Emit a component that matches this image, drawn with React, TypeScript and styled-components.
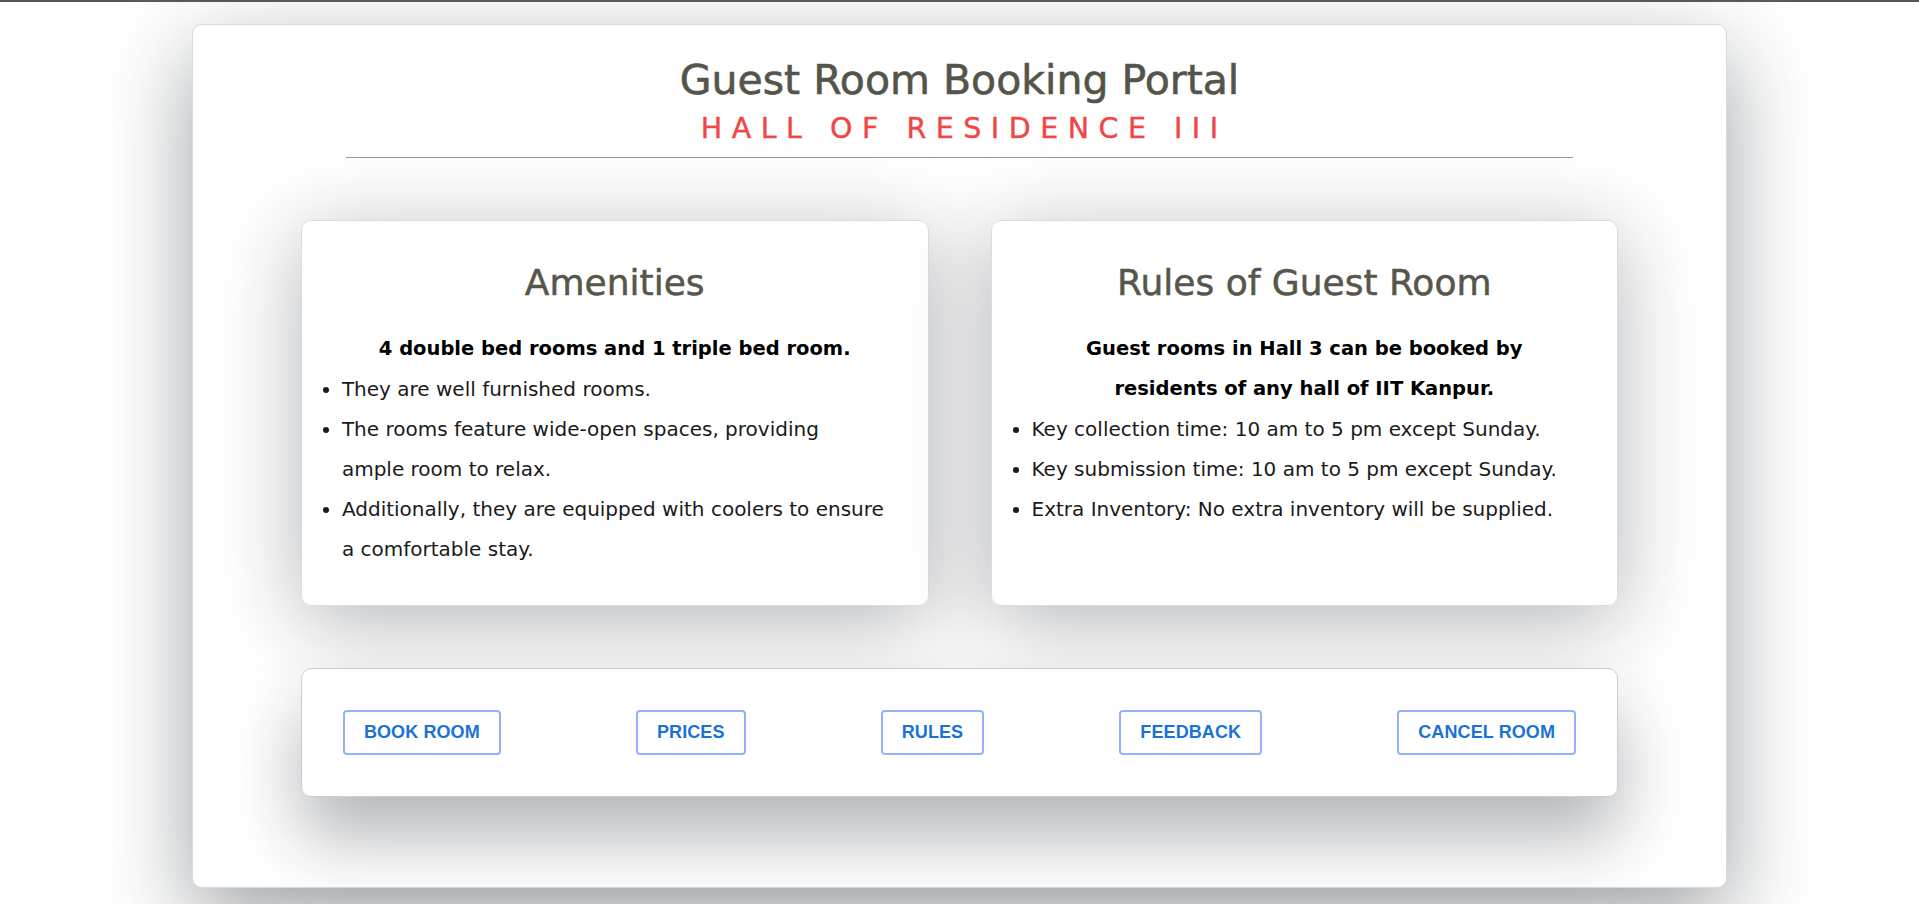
import React from "react";
import styled, { createGlobalStyle } from "styled-components";

const GlobalStyle = createGlobalStyle`
  html, body {
    margin: 0;
    padding: 0;
    background: #ffffff;
  }
  body {
    border-top: 2px solid #585858;
    font-family: "DejaVu Sans", "Open Sans", sans-serif;
  }
  * { box-sizing: border-box; }
`;

const Page = styled.div`
  padding: 22px 0 16px;
`;

const Portal = styled.main`
  width: 80%;
  margin: 0 auto;
  background: #ffffff;
  border: 1px solid #d6dbe2;
  border-radius: 10px;
  box-shadow: 0 30px 90px rgba(20, 30, 40, 0.42);
  padding: 31px 0 90px;
`;

const Header = styled.header`
  display: flex;
  flex-direction: column;
  align-items: center;
`;

const Title = styled.h1`
  margin: 0;
  font-family: "DejaVu Sans", sans-serif;
  font-weight: 400;
  font-size: 41px;
  line-height: 49px;
  color: #55544a;
  -webkit-text-stroke: 0.6px #55544a;
`;

const Subtitle = styled.h2`
  margin: 7px 0 0;
  font-family: "DejaVu Sans", sans-serif;
  font-weight: 400;
  font-size: 28.5px;
  line-height: 33.6px;
  letter-spacing: 9.5px;
  margin-right: -9.5px;
  color: #f24545;
  -webkit-text-stroke: 0.4px #f24545;
`;

const Divider = styled.hr`
  width: 80%;
  margin: 11px auto 0;
  border: none;
  border-top: 1px solid #9a9a9a;
  height: 0;
`;

const Body = styled.section`
  padding: 62px 108px 0;
  display: flex;
  flex-direction: column;
  gap: 62px;
`;

const CardRow = styled.div`
  display: grid;
  grid-template-columns: 1fr 1fr;
  gap: 62px;
`;

const Card = styled.article`
  background: rgba(255, 255, 255, 0.84);
  border: 1px solid #d9dde3;
  border-radius: 10px;
  box-shadow: 0 16px 85px rgba(20, 25, 35, 0.32);
  padding: 40px 20px 36px;
`;

const CardTitle = styled.h3`
  margin: 0 0 25px;
  text-align: center;
  font-family: "DejaVu Sans", sans-serif;
  font-weight: 400;
  font-size: 36px;
  line-height: 43.2px;
  color: #57564a;
  -webkit-text-stroke: 0.5px #57564a;
`;

const Lead = styled.p`
  margin: 0;
  padding: 0 40px;
  text-align: center;
  font-family: "DejaVu Sans", sans-serif;
  font-weight: 700;
  font-size: 19.5px;
  line-height: 40px;
  color: #000000;
`;

const List = styled.ul`
  margin: 0;
  padding: 0 20px 0 20px;
  list-style: disc;
`;

const Item = styled.li`
  font-family: "DejaVu Sans", sans-serif;
  font-size: 20px;
  line-height: 40px;
  color: #1a1a1a;
`;

const ActionBar = styled.nav`
  display: flex;
  justify-content: space-between;
  align-items: center;
  padding: 41px;
  background: linear-gradient(180deg, rgba(255, 255, 255, 0.8), rgba(255, 255, 255, 0.96));
  border: 1px solid #c9ced6;
  border-radius: 10px;
  box-shadow: 0 40px 70px rgba(20, 25, 35, 0.32);
`;

const ActionButton = styled.button`
  font-family: "Liberation Sans", Arial, sans-serif;
  font-weight: 700;
  font-size: 18px;
  line-height: 21px;
  letter-spacing: 0.1px;
  text-transform: uppercase;
  color: #1a72d6;
  background: #ffffff;
  border: 2px solid #93b2fb;
  border-radius: 4px;
  padding: 10px 19px;
  cursor: pointer;
`;

const amenities: string[][] = [
  ["They are well furnished rooms."],
  ["The rooms feature wide-open spaces, providing", "ample room to relax."],
  ["Additionally, they are equipped with coolers to ensure", "a comfortable stay."],
];

const rules: string[][] = [
  ["Key collection time: 10 am to 5 pm except Sunday."],
  ["Key submission time: 10 am to 5 pm except Sunday."],
  ["Extra Inventory: No extra inventory will be supplied."],
];

const actions = ["Book Room", "Prices", "Rules", "Feedback", "Cancel Room"];

function Lines({ lines }: { lines: string[] }) {
  return (
    <>
      {lines.map((l, i) => (
        <React.Fragment key={l}>
          {i > 0 && <br />}
          {l}
        </React.Fragment>
      ))}
    </>
  );
}

export default function App() {
  return (
    <>
      <GlobalStyle />
      <Page>
        <Portal>
          <Header>
            <Title>Guest Room Booking Portal</Title>
            <Subtitle>HALL OF RESIDENCE III</Subtitle>
          </Header>
          <Divider />
          <Body>
            <CardRow>
              <Card>
                <CardTitle>Amenities</CardTitle>
                <Lead>4 double bed rooms and 1 triple bed room.</Lead>
                <List>
                  {amenities.map((a) => (
                    <Item key={a[0]}>
                      <Lines lines={a} />
                    </Item>
                  ))}
                </List>
              </Card>
              <Card>
                <CardTitle>Rules of Guest Room</CardTitle>
                <Lead>
                  Guest rooms in Hall 3 can be booked by residents of any hall of IIT Kanpur.
                </Lead>
                <List>
                  {rules.map((r) => (
                    <Item key={r[0]}>
                      <Lines lines={r} />
                    </Item>
                  ))}
                </List>
              </Card>
            </CardRow>
            <ActionBar>
              {actions.map((a) => (
                <ActionButton key={a}>{a}</ActionButton>
              ))}
            </ActionBar>
          </Body>
        </Portal>
      </Page>
    </>
  );
}
